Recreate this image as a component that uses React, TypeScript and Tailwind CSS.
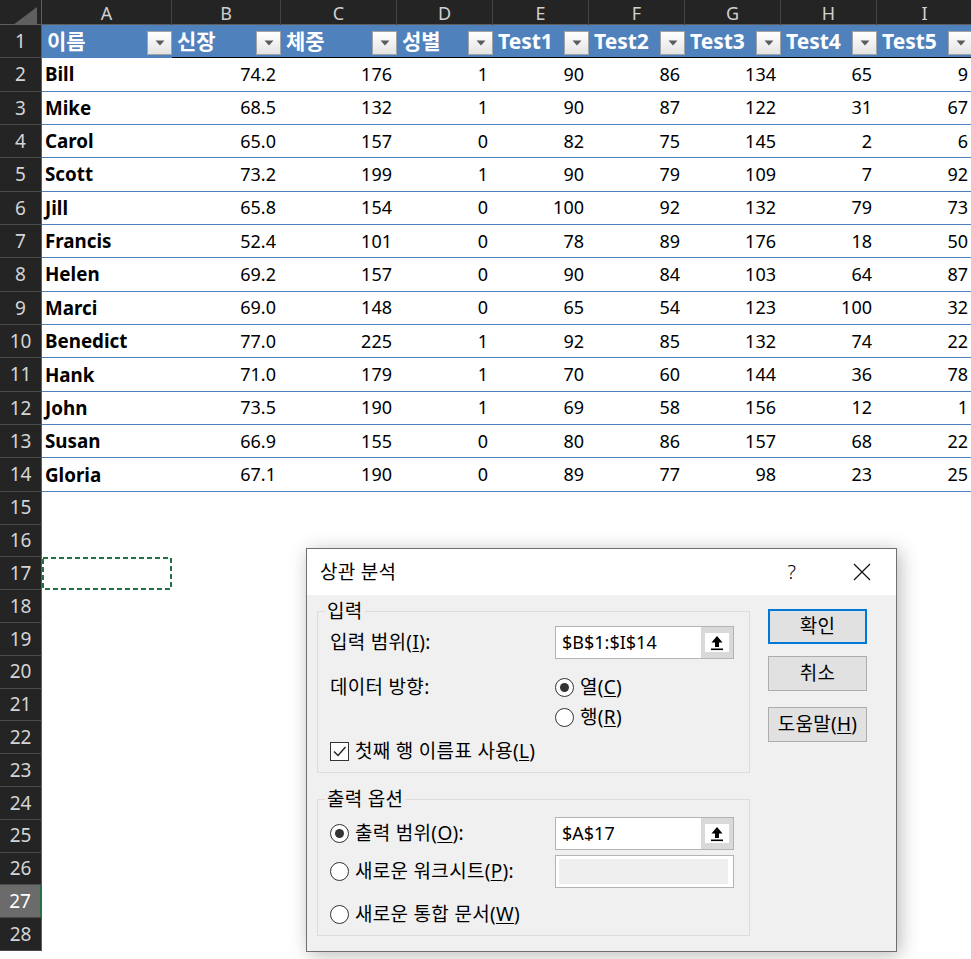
import React from "react";

const GRID =
  "grid grid-cols-[42px_130px_109px_116px_96px_96px_96px_96px_96px_96px]";

const COLS = ["A", "B", "C", "D", "E", "F", "G", "H", "I"];
const HEAD = ["이름", "신장", "체중", "성별", "Test1", "Test2", "Test3", "Test4", "Test5"];

const DATA: (string | number)[][] = [
  ["Bill", "74.2", 176, 1, 90, 86, 134, 65, 9],
  ["Mike", "68.5", 132, 1, 90, 87, 122, 31, 67],
  ["Carol", "65.0", 157, 0, 82, 75, 145, 2, 6],
  ["Scott", "73.2", 199, 1, 90, 79, 109, 7, 92],
  ["Jill", "65.8", 154, 0, 100, 92, 132, 79, 73],
  ["Francis", "52.4", 101, 0, 78, 89, 176, 18, 50],
  ["Helen", "69.2", 157, 0, 90, 84, 103, 64, 87],
  ["Marci", "69.0", 148, 0, 65, 54, 123, 100, 32],
  ["Benedict", "77.0", 225, 1, 92, 85, 132, 74, 22],
  ["Hank", "71.0", 179, 1, 70, 60, 144, 36, 78],
  ["John", "73.5", 190, 1, 69, 58, 156, 12, 1],
  ["Susan", "66.9", 155, 0, 80, 86, 157, 68, 22],
  ["Gloria", "67.1", 190, 0, 89, 77, 98, 23, 25],
];

function RowHead({ n, active }: { n: number; active?: boolean }) {
  if (active) {
    return (
      <div className="flex items-center justify-center bg-[#6b6b6b] text-white text-[19px] border-b border-[#4a4a4a] border-r-2 border-r-[#217346]">
        {n}
      </div>
    );
  }
  return (
    <div className="flex items-center justify-center bg-[#242424] text-[#d4d4d4] text-[19px] border-b border-[#4a4a4a] border-r border-r-[#5e5e5e]">
      {n}
    </div>
  );
}

function FilterButton() {
  return (
    <div className="self-end mb-[2px] w-[25px] h-[24px] shrink-0 border border-[#a3a3a3] bg-gradient-to-b from-white to-[#e4e4e4] flex items-center justify-center">
      <svg width="10" height="6" viewBox="0 0 10 6">
        <path d="M0.5 0.5 H9.5 L5 5.5 Z" fill="#5a5a5a" />
      </svg>
    </div>
  );
}

function Radio({ checked }: { checked?: boolean }) {
  return (
    <span className="w-[19px] h-[19px] rounded-full border border-[#333] bg-white flex items-center justify-center shrink-0">
      {checked && <span className="w-[9px] h-[9px] rounded-full bg-[#333]" />}
    </span>
  );
}

function UploadButton() {
  return (
    <div className="w-[32px] h-full bg-[#d9d9d9] flex items-center justify-center">
      <div className="w-[24px] h-[19px] bg-white flex items-center justify-center">
        <svg width="14" height="16" viewBox="0 0 14 16">
          <path d="M7 1 L12.5 7.5 H9 V12 H5 V7.5 H1.5 Z" fill="#000" />
          <rect x="1" y="13.5" width="12" height="1.6" fill="#000" />
        </svg>
      </div>
    </div>
  );
}

function Dialog() {
  return (
    <div className="absolute left-[306px] top-[548px] w-[591px] h-[404px] border border-[#6f6f6f] bg-[#f0f0f0] shadow-[3px_3px_18px_rgba(0,0,0,0.28)] text-[19px] tracking-[0.3px] text-black flex flex-col">
      {/* title bar */}
      <div className="h-[46px] shrink-0 bg-white flex items-center pl-[13px]">
        <span className="flex-1">상관 분석</span>
        <span className="w-[46px] text-center text-[20px] font-light">?</span>
        <span className="w-[46px] ml-[24px] mr-[11px] flex items-center justify-center">
          <svg width="18" height="18" viewBox="0 0 18 18">
            <path d="M1 1 L17 17 M17 1 L1 17" stroke="#111" strokeWidth="1.2" />
          </svg>
        </span>
      </div>

      <div className="flex flex-1 pl-[10px]">
        <div className="w-[433px] pt-[16px] flex flex-col">
          {/* 입력 */}
          <div className="relative h-[162px] border border-[#dcdcdc] pt-[14px] pl-[12px]">
            <span className="absolute left-[7px] -top-[13px] px-[2px] leading-[24px] bg-[#f0f0f0]">입력</span>
            <div className="flex items-center h-[33px]">
              <span className="w-[225px]">
                입력 범위(<u className="underline-offset-2">I</u>):
              </span>
              <div className="w-[179px] h-full flex border border-[#b4b4b4] bg-white">
                <span className="flex-1 flex items-center pl-[6px] tracking-normal text-[18px]">$B$1:$I$14</span>
                <UploadButton />
              </div>
            </div>
            <div className="flex items-center h-[30px] mt-[13px]">
              <span className="w-[225px]">데이터 방향:</span>
              <Radio checked />
              <span className="ml-[6px]">
                열(<u className="underline-offset-2">C</u>)
              </span>
            </div>
            <div className="flex items-center h-[30px] pl-[225px]">
              <Radio />
              <span className="ml-[6px]">
                행(<u className="underline-offset-2">R</u>)
              </span>
            </div>
            <div className="flex items-center h-[30px] mt-[4px]">
              <span className="w-[19px] h-[19px] border border-[#333] bg-white flex items-center justify-center">
                <svg width="15" height="15" viewBox="0 0 15 15">
                  <path d="M2 7.5 L6 11.5 L13.5 3" fill="none" stroke="#222" strokeWidth="1.4" />
                </svg>
              </span>
              <span className="ml-[6px]">
                첫째 행 이름표 사용(<u className="underline-offset-2">L</u>)
              </span>
            </div>
          </div>

          {/* 출력 옵션 */}
          <div className="relative h-[137px] mt-[26px] border border-[#dcdcdc] pt-[17px] pl-[12px]">
            <span className="absolute left-[7px] -top-[13px] px-[2px] leading-[24px] bg-[#f0f0f0]">출력 옵션</span>
            <div className="flex items-center h-[33px]">
              <div className="w-[225px] flex items-center">
                <Radio checked />
                <span className="ml-[6px]">
                  출력 범위(<u className="underline-offset-2">O</u>):
                </span>
              </div>
              <div className="w-[179px] h-full flex border border-[#b4b4b4] bg-white">
                <span className="flex-1 flex items-center pl-[6px] tracking-normal text-[18px]">$A$17</span>
                <UploadButton />
              </div>
            </div>
            <div className="flex items-center h-[33px] mt-[5px]">
              <div className="w-[225px] flex items-center">
                <Radio />
                <span className="ml-[6px]">
                  새로운 워크시트(<u className="underline-offset-2">P</u>):
                </span>
              </div>
              <div className="w-[179px] h-full border border-[#b4b4b4] bg-white p-[3px] pr-[5px]">
                <div className="w-full h-full bg-[#efefef]" />
              </div>
            </div>
            <div className="flex items-center h-[30px] mt-[11px]">
              <Radio />
              <span className="ml-[6px]">
                새로운 통합 문서(<u className="underline-offset-2">W</u>)
              </span>
            </div>
          </div>
        </div>

        {/* buttons */}
        <div className="ml-[18px] pt-[14px] flex flex-col">
          <button className="w-[99px] h-[35px] border-2 border-[#0078d7] bg-[#e1e1e1] flex items-center justify-center">
            확인
          </button>
          <button className="w-[99px] h-[35px] mt-[12px] border border-[#adadad] bg-[#e1e1e1] flex items-center justify-center">
            취소
          </button>
          <button className="w-[99px] h-[35px] mt-[16px] border border-[#adadad] bg-[#e1e1e1] flex items-center justify-center">
            도움말(<u className="underline-offset-2">H</u>)
          </button>
        </div>
      </div>
    </div>
  );
}

export default function App() {
  return (
    <div className="relative w-[971px] h-[959px] overflow-hidden bg-white font-['Noto_Sans','Noto_Sans_CJK_KR',sans-serif]">
      {/* column letters */}
      <div className={`${GRID} h-[25px] bg-[#242424] border-b border-[#5e5e5e]`}>
        <div className="relative border-r border-[#5e5e5e]">
          <svg className="absolute right-[4px] bottom-[2px]" width="24" height="18" viewBox="0 0 24 18">
            <path d="M24 0 V18 H0 Z" fill="#5f5f5f" />
          </svg>
        </div>
        {COLS.map((c) => (
          <div
            key={c}
            className="flex items-center justify-center text-[18px] text-[#d0d0d0] border-r border-[#444]"
          >
            {c}
          </div>
        ))}
      </div>

      {/* row 1 : table header */}
      <div className={`${GRID} h-[33.35px]`}>
        <RowHead n={1} />
        {HEAD.map((h, i) => (
          <div
            key={h}
            className={
              i === 0
                ? "flex justify-between bg-[#4f81bd] border-b border-[#4f81bd]"
                : "flex justify-between bg-[#4f81bd] border-b border-black"
            }
          >
            <span className="self-center pl-[5px] text-[21px] font-bold text-white leading-none">{h}</span>
            <FilterButton />
          </div>
        ))}
      </div>

      {/* data rows */}
      {DATA.map((row, r) => (
        <div key={r} className={`${GRID} h-[33.35px]`}>
          <RowHead n={r + 2} />
          {row.map((v, i) => (
            <div
              key={i}
              className={
                i === 0
                  ? "flex items-center pl-[3px] text-[18.8px] font-bold text-black border-b border-[#4f81bd]"
                  : "flex items-center justify-end pr-[5px] text-[18px] text-black border-b border-[#4f81bd]"
              }
            >
              {v}
            </div>
          ))}
        </div>
      ))}

      {/* empty rows */}
      {Array.from({ length: 14 }, (_, k) => k + 15).map((n) => (
        <div key={n} className={`${GRID} h-[32.8px]`}>
          <RowHead n={n} active={n === 27} />
          {n === 17 ? (
            <div className="relative">
              <svg className="absolute inset-0" width="130" height="33" viewBox="0 0 130 33">
                <rect
                  x="1"
                  y="1"
                  width="128"
                  height="31"
                  fill="none"
                  stroke="#217346"
                  strokeWidth="2"
                  strokeDasharray="5 3"
                />
              </svg>
            </div>
          ) : (
            <div />
          )}
        </div>
      ))}

      <Dialog />
    </div>
  );
}
